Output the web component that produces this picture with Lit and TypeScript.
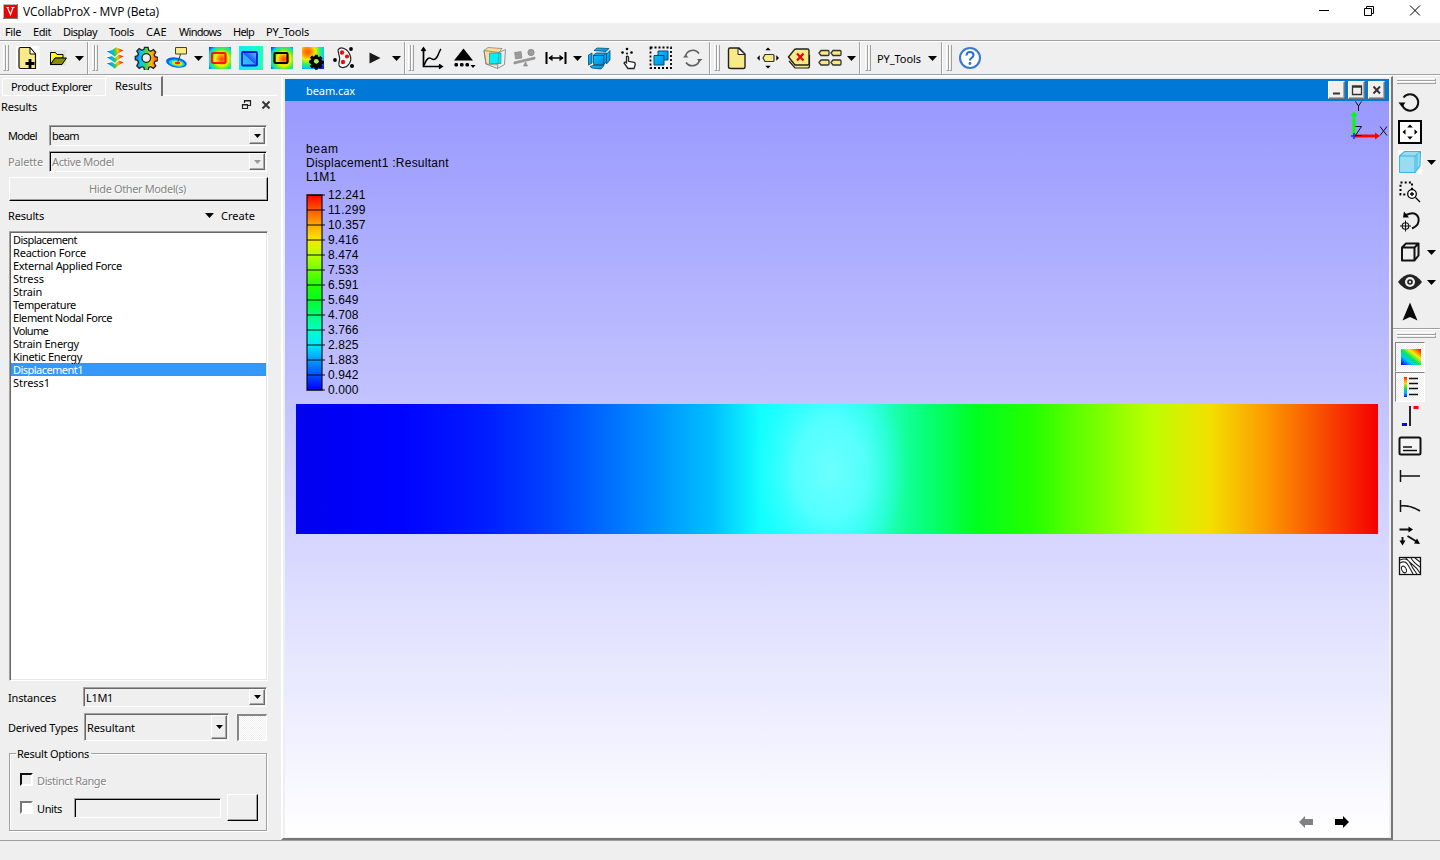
import { LitElement, html, svg, css } from "lit";
import { customElement, property, query } from "lit/decorators.js";

/* A label whose tracking is tuned so that it occupies a known width. */
@customElement("fit-text")
export class FitText extends LitElement {
  static styles = css`
    :host { display: inline-block; white-space: pre; }
    span { display: inline-block; white-space: pre; }
  `;
  @property({ type: Number }) w = 0;
  @property() text = "";
  @query("span") span!: HTMLSpanElement;
  firstUpdated() {
    const n = this.text.length;
    const natural = this.span.getBoundingClientRect().width;
    if (n && this.w) this.span.style.letterSpacing = `${(this.w - natural) / n}px`;
  }
  render() { return html`<span>${this.text}</span>`; }
}

const t = (text: string, w: number) => html`<fit-text .text=${text} .w=${w}></fit-text>`;

const rainbow = svg`
  <linearGradient id="rb" x1="0" y1="0" x2="1" y2="0"><stop offset="0" stop-color="#1060ff"/><stop offset=".25" stop-color="#00d0f0"/><stop offset=".45" stop-color="#30d860"/><stop offset=".7" stop-color="#ffc000"/><stop offset="1" stop-color="#ff3000"/></linearGradient>
  <linearGradient id="lay" gradientUnits="userSpaceOnUse" x1="3" y1="6" x2="20" y2="4"><stop offset="0" stop-color="#0040ff"/><stop offset=".3" stop-color="#00b0ff"/><stop offset=".5" stop-color="#20d060"/><stop offset=".68" stop-color="#ffc000"/><stop offset=".95" stop-color="#ff2000"/></linearGradient>
  <linearGradient id="rbd" x1="0" y1="1" x2="1" y2="0"><stop offset=".05" stop-color="#0018ff"/><stop offset=".3" stop-color="#00c8ff"/><stop offset=".48" stop-color="#00e860"/><stop offset=".68" stop-color="#f8f000"/><stop offset=".95" stop-color="#ff2000"/></linearGradient>
  <linearGradient id="rbv" x1="0" y1="0" x2="0" y2="1"><stop offset="0" stop-color="#ff2000"/><stop offset=".3" stop-color="#ffe000"/><stop offset=".55" stop-color="#20e040"/><stop offset=".8" stop-color="#00b0ff"/><stop offset="1" stop-color="#0020ff"/></linearGradient>
  <radialGradient id="hot" cx=".58" cy=".55" r=".75"><stop offset="0" stop-color="#ff3800"/><stop offset=".2" stop-color="#ff9000"/><stop offset=".4" stop-color="#f8f000"/><stop offset=".6" stop-color="#50f030"/><stop offset=".8" stop-color="#00d8e8"/><stop offset="1" stop-color="#0040ff"/></radialGradient>
  <radialGradient id="hot2" cx=".25" cy=".22" r=".95"><stop offset="0" stop-color="#ff5800"/><stop offset=".2" stop-color="#ff9000"/><stop offset=".38" stop-color="#f0f000"/><stop offset=".6" stop-color="#30f060"/><stop offset=".78" stop-color="#00d0ff"/><stop offset="1" stop-color="#0030ff"/></radialGradient>
  <linearGradient id="mint" x1="0" y1="0" x2="1" y2="0"><stop offset="0" stop-color="#10e8ff"/><stop offset="1" stop-color="#20ffb8"/></linearGradient>
  <linearGradient id="cold" x1="0" y1="1" x2="1" y2="0"><stop offset="0" stop-color="#40c8ff"/><stop offset=".48" stop-color="#30a8ff"/><stop offset=".5" stop-color="#1858ff"/><stop offset="1" stop-color="#70c0ff"/></linearGradient>
  <linearGradient id="blu" x1="0" y1="0" x2="1" y2="1"><stop offset="0" stop-color="#00c8ff"/><stop offset="1" stop-color="#0088e8"/></linearGradient>`;

const gear = "M10.2 2h3.6l.6 3 2 .9 2.7-1.7 2.4 2.5-1.6 2.6.8 2 3 .6v3.4l-3 .6-.8 2 1.6 2.6-2.4 2.5-2.7-1.7-2 .8-.6 3h-3.6l-.6-3-2-.8-2.7 1.7-2.4-2.5L4.1 17l-.8-2-2.3-.6V11l2.3-.7.8-2-1.6-2.6 2.4-2.5 2.7 1.7 2-.9z";

const icons: Record<string, unknown> = {
  newdoc: svg`<rect x="-.5" y="0" width="24" height="24" fill="#fff"/><path d="M4.500 1.500H14l5.500 6.500V22.500H4.500Q3 22.500 3 21V3Q3 1.500 4.500 1.500z" fill="#f8ea86" stroke="#111" stroke-width="1.200"/><path d="M14 1.500V8h5.500z" fill="#fff" stroke="#111"/><path d="M9.500 17.500h9M14 13v9" stroke="#000" stroke-width="2.800"/>`,
  open: svg`<rect x="4" y="4" width="16" height="16" fill="#e3e3e1"/><path d="M4.500 18.500V6.500h5l1.500 2h6V12H9z" fill="#ffff00" stroke="#000"/><path d="M4.500 18.500 9 12h11.500L16 18.500z" fill="#8a8a00" stroke="#000"/>`,
  layers: svg`${[11.500, 5.500, -.5].map((y) => svg`<path transform="translate(0 ${y})" d="M2 5Q8 5.500 13 1L22 5Q17 6.500 12 12z" fill="url(#lay)" stroke="#f6f6f6" stroke-width="1.100"/>`)}`,
  gear: svg`<path d=${gear} transform="translate(.3 -.6)" fill="url(#rb)" stroke="#222" stroke-width="1.300"/><circle cx="12.300" cy="12" r="4.300" fill="#efefef" stroke="#222" stroke-width="1.300"/>`,
  probe: svg`<ellipse cx="10.500" cy="16.500" rx="10.500" ry="5" transform="rotate(10 10 16)" fill="#0060ff"/><ellipse cx="11" cy="17" rx="8" ry="3.500" transform="rotate(10 10 16)" fill="#00e0d0"/><ellipse cx="11.500" cy="17" rx="5.500" ry="2.300" transform="rotate(10 10 16)" fill="#d0f000"/><ellipse cx="11.500" cy="17" rx="2.800" ry="1.200" fill="#ff2000"/><path d="M12 15.500 15 7" stroke="#333"/><path d="M9.500 1.500h11v6.500h-11z" fill="#f8ea86" stroke="#4a4520"/>`,
  hotred: svg`<rect x="1" y="1" width="22" height="22" fill="url(#hot)"/><rect x="4" y="7" width="13.500" height="10" rx="1" fill="none" stroke="#f01818" stroke-width="2.200"/>`,
  cold: svg`<rect x="0" y="0" width="24" height="24" fill="url(#mint)"/><rect x="3" y="6" width="15" height="13.500" rx="1" fill="url(#cold)" stroke="#0018d8" stroke-width="1.800"/>`,
  hotblk: svg`<rect x="1" y="1" width="22" height="22" fill="url(#hot)"/><rect x="4.500" y="7" width="13" height="10" rx="1" fill="none" stroke="#000" stroke-width="2.200"/>`,
  hotgear: svg`<rect x="1" y="1" width="22" height="22" fill="url(#hot2)"/><g transform="translate(8 8) scale(.61)"><path d=${gear} stroke="#000" stroke-width="1.500"/><circle cx="12" cy="12" r="4" fill="#a8f060"/></g>`,
  palette: svg`<path d="M5 4Q7 .800 11 2.500T17 9t-1 9-7 3.500-3-5 .5-5.500T5 4z" fill="#f8f8f8" stroke="#222" stroke-width="1.200"/><g fill="#e81010"><circle cx="9" cy="6.500" r="2.200"/><circle cx="14" cy="10.500" r="2.100"/><circle cx="10" cy="16" r="2.200"/></g><circle cx="18" cy="3" r="1.900"/><circle cx="2" cy="14" r="1.900"/><circle cx="19" cy="20" r="2"/>`,
  play: svg`<path d="M6.500 6.500 17.500 12 6.500 17.500z" fill="#1a1a1a"/>`,
  chart: svg`<path d="M3.500 3v17.500H21M1.500 5 3.500 2l2 3M19 18.500l3 2-3 2" fill="none" stroke="#000" stroke-width="1.700"/><path d="M4 19.500C7 12 9 11 11 12.500s4 1.500 6-1.500 2-6 4-8" fill="none" stroke="#000" stroke-width="1.500"/>`,
  peak: svg`<path d="M11.500 2.500 21 14.500H2z"/><rect x="2.500" y="17" width="3.500" height="3.500" rx="1.200"/><rect x="8" y="17" width="3.500" height="3.500" rx="1.200"/><rect x="13.500" y="17" width="3.500" height="3.500" rx="1.200"/><path d="M18.500 19h5L21 22z"/>`,
  section: svg`<path d="M1 4.500 5 1.500l14 1L16 6.500 14 19 3 18z" fill="#ffdc9a" stroke="#777" stroke-width=".700"/><path d="M6.500 7H18v10.500H6.500z" fill="#00f0ff" stroke="#088" stroke-width=".6"/><path d="M1 4.500 16 6.500 14.500 22.500 3 18zM16 6.500l6.500-3-1 15-7 4" fill="none" stroke="#6a8080" stroke-width=".8"/>`,
  balance: svg`<g fill="#9b9b9b" stroke="#808080" stroke-width=".600"><rect x="2" y="6" width="6.500" height="6.500" transform="rotate(-8 5 9)"/><circle cx="18" cy="6.500" r="3.200"/><path d="m1 16 21-5v2L1 18z"/><path d="m12.500 16 2 4h-4z"/></g>`,
  measure: svg`<path d="M2.500 6v12M21.500 6v12" stroke="#000" stroke-width="2"/><path d="M5 12h14" stroke="#000" stroke-width="1.500"/><path d="m4.500 12 4-3.200v6.400zM19.500 12l-4-3.200v6.400z"/>`,
  explode: svg`<g fill="url(#blu)" stroke="#0a4a70" stroke-width=".8"><path d="M7 4.500 10 2l12 .5-3 3z"/><path d="m19.500 8 3.500-3.500V14l-3.500 4z"/><path d="M1.500 9 5 7v10l-3.500 2z"/><path d="M6 9.500 9 7h10.500L17 9.500z"/><path d="M6.500 9.500H17v9H6.500z"/><path d="M17 9.500 19.500 7v8.500l-2.500 3z"/><path d="m3 20.500 3-1h11l-3 3.500-9-1z"/></g>`,
  touch: svg`<path d="M9.500 10.500q1.500-.8 2 .8v4l5.500 1q1.500.4 1.300 2L17 22.500h-6l-4-5.500q1-1.500 2.500-.2z" fill="#fff" stroke="#222" stroke-width="1.300"/><g><circle cx="10" cy="3" r="1.300"/><circle cx="5.500" cy="6.500" r="1.300"/><circle cx="14.500" cy="6.500" r="1.300"/><circle cx="10" cy="7.500" r="1"/></g>`,
  selbox: svg`<rect x="1.500" y="1.500" width="20.500" height="20.500" fill="none" stroke="#000" stroke-width="1.800" stroke-dasharray="2 2"/><path d="M9 5h10v9H9z" fill="url(#blu)" stroke="#044a78"/><path d="M5 9.500h10v9.500H5z" fill="url(#blu)" stroke="#044a78"/>`,
  refresh: svg`<path d="M4.500 10.500a7.500 7.500 0 0 1 13.500-3M18.500 14a7.500 7.500 0 0 1-13.500 2.500" fill="none" stroke="#5f5f5f" stroke-width="1.600"/><path d="m2 11.500 2.500-3 3 3zM21.500 13l-3 3-2.500-3z" fill="#5f5f5f"/>`,
  note: svg`<path d="M5 2h9l6 6v13q0 1.500-1.500 1.500h-12Q3.500 22.500 3.500 21V3.500Q3.500 2 5 2z" fill="#f8ea86" stroke="#222" stroke-width="1.400"/><path d="M13 2v6.500h7z" fill="#f4f4f4" stroke="#222"/>`,
  movetag: svg`<path d="m7 12 2-3.500h8q1 0 1 1v5q0 1-1 1H9z" fill="#f8ea86" stroke="#333" stroke-width="1.200"/><path d="m12 1.500 2.700 2.700H9.300zM12 22.500l2.700-2.700H9.300zM1 12l2.700-2.700v5.400zM23 12l-2.700-2.700v5.400z"/>`,
  deltag: svg`<path d="m2 15 6 7h12.500q2 0 2-2V9" fill="#f8ea86" stroke="#222" stroke-width="1.200"/><path d="m1.500 11 6-7.500Q8.500 3 9 3h11.500q1.500 0 1.500 1.500v13q0 1.500-1.500 1.500H8z" fill="#f8ea86" stroke="#222" stroke-width="1.400"/><path d="m10 7.500 6.500 7M16.500 7.500l-6.500 7" stroke="#f00000" stroke-width="2.200"/>`,
  tags: svg`${[[1, 4], [13, 4], [1, 13.500], [13, 13.500]].map(([x, y]) => svg`<path transform="translate(${x} ${y})" d="m0 3 2-2.500h7q1 0 1 1v3q0 1-1 1H2z" fill="#f8ea86" stroke="#333" stroke-width="1.300"/>`)}`,
  help: svg`<circle cx="12" cy="12" r="10" fill="#fdfeff" stroke="#3b7ad0" stroke-width="2.100"/><path d="M8.500 9.500q0-3.500 3.500-3.500t3.500 3q0 1.800-1.800 2.800T12 14.500" fill="none" stroke="#2f6fca" stroke-width="2.100"/><circle cx="12" cy="17.500" r="1.400" fill="#2f6fca"/>`,
  rotate: svg`<path d="M4 14a8.200 8.200 0 1 0 1.500-6.500" fill="none" stroke="#111" stroke-width="2"/><path d="M.5 12.500h7L4 17z"/>`,
  fit: svg`<rect x="1" y="1" width="22" height="22" fill="#fff" stroke="#000" stroke-width="2"/><path d="m12 4.500 2.800 3H9.200zM12 19.500l2.800-3H9.200zM4.500 12l3-2.800v5.600zM19.500 12l-3-2.800v5.600z"/>`,
  cube: svg`<rect x="0" y="0" width="24" height="24" fill="#fff"/><path d="m1.500 6 5-4.500h16L22 16l-5 6.500H1.500z" fill="#9adcf0" stroke="#35b6e6" stroke-width="1.100"/><path d="M1.500 6H17v16.500M17 6l5.500-4.500M19 5v15" fill="none" stroke="#35b6e6"/>`,
  zoomsel: svg`<path d="M14 14V2.500H2.500v12H9" fill="none" stroke="#000" stroke-width="2" stroke-dasharray="2 2.200"/><circle cx="14" cy="14" r="4.300" fill="#fff" stroke="#000" stroke-width="1.300"/><path d="M12 14h4M14 12v4M17.500 17.500l4.500 4.500" stroke="#000" stroke-width="1.300"/>`,
  rotc: svg`<path d="M8 5Q18 .500 20.500 8 22 15 14 18.500" fill="none" stroke="#111" stroke-width="2"/><path d="M5 7.500 6 1.500l5 6z"/><circle cx="7.500" cy="16" r="3.300" fill="none" stroke="#111" stroke-width="1.100"/><path d="M2 16h11M7.500 10.500v11" stroke="#111"/>`,
  wirebox: svg`<path d="M4 7.500h12.500V20.500H4zM4 7.500l4-4h12.500v12l-4 5M16.500 7.500l4-4" fill="none" stroke="#111" stroke-width="2" stroke-linejoin="round"/>`,
  eye: svg`<path d="M0 12Q12-3.500 24 12 12 27.500 0 12z" fill="#222"/><circle cx="12" cy="12" r="5" fill="#efefef"/><circle cx="12" cy="12" r="2.800" fill="#222"/><circle cx="12" cy="12" r="1.200" fill="#ddd"/>`,
  north: svg`<path d="m12 2.500 7.500 18-7.500-3.500-7.500 3.500z" fill="#0a0a0a"/>`,
  contour: svg`<rect x="2" y="4" width="20" height="16" fill="url(#rbd)"/>`,
  legend: svg`<rect x="5" y="2" width="3" height="20" fill="url(#rbv)"/><path d="M10 3.500h9M10 8.500h9M10 13.500h9M10 19.500h9" stroke="#111" stroke-width="1.300"/>`,
  minmax: svg`<path d="M12 2v20" stroke="#111" stroke-width="1.800"/><rect x="15.500" y="2" width="5" height="3" fill="#f00"/><rect x="4" y="19" width="5" height="3" fill="#00f"/>`,
  caption: svg`<rect x="1.500" y="3.500" width="21" height="17" rx="1.500" fill="#f4f4f4" stroke="#111" stroke-width="2"/><path d="M5 13h9M5 16.500h14" stroke="#111" stroke-width="1.700"/>`,
  line: svg`<path d="M2.500 6v12M2.500 12H22" stroke="#111" stroke-width="1.500"/>`,
  curve: svg`<path d="M2.500 6v12M2.500 12Q12 11 22 17" fill="none" stroke="#111" stroke-width="1.500"/>`,
  vectors: svg`<path d="M1.500 5.500h10M4.500 13v4M9.500 12l9 5.500" stroke="#111" stroke-width="1.900"/><path d="m10.500 2.500 4.500 3-4.500 3zM1.500 16.500h6l-3 5zM22 20l-6-.5 3-5z"/>`,
  contours: svg`<rect x="1.500" y="3.500" width="21" height="17" fill="#fff" stroke="#111" stroke-width="1.300"/><path d="M2 9q5-3 8 2t5 9M2 6q7-3 10 3t7 11M8 4q3 4 7 7t7 8M13 4q2 4 9 9M17 4l5 4" fill="none" stroke="#222" stroke-width="1.100"/><ellipse cx="6" cy="15.500" rx="2.200" ry="3.500" transform="rotate(-25 6 15.500)" fill="none" stroke="#222"/>`,
};

const icon = (n: string) => html`<svg class="ic" viewBox="0 0 24 24">${icons[n]}</svg>`;
const arrow = html`<svg class="dd" viewBox="0 0 9 5"><path d="M0 0h9L4.500 5z" /></svg>`;

/* Cells of each tool bar: name and cell width; "v" is a drop-down mark. */
const bars: { h: number; cells: [string, number][]; pad?: number }[] = [
  { h: 12, cells: [["newdoc", 31], ["open", 29], ["v", 15]] },
  { h: 11, cells: [["layers", 30], ["gear", 31], ["probe", 33], ["v", 9], ["hotred", 33], ["cold", 30], ["hotblk", 31], ["hotgear", 31], ["palette", 33], ["play", 27], ["v", 16]] },
  { h: 10, cells: [["chart", 32], ["peak", 31], ["section", 31], ["balance", 30], ["measure", 31], ["v", 13], ["explode", 30], ["touch", 30], ["selbox", 33], ["refresh", 31]], pad: 1 },
  { h: 11, cells: [["note", 30], ["movetag", 32], ["deltag", 30], ["tags", 32], ["v", 11]], pad: 2 },
  { h: 13, cells: [["PY_Tools", 50], ["v", 17]] },
  { h: 12, cells: [["help", 30]] },
];

const menus: [string, number][] = [["File", 16], ["Edit", 18], ["Display", 34], ["Tools", 25], ["CAE", 21], ["Windows", 42], ["Help", 21], ["PY_Tools", 43]];
const results: [string, number][] = [["Displacement", 64], ["Reaction Force", 73], ["External Applied Force", 109], ["Stress", 31], ["Strain", 29], ["Temperature", 63], ["Element Nodal Force", 99], ["Volume", 35], ["Strain Energy", 66], ["Kinetic Energy", 69], ["Displacement1", 70], ["Stress1", 37]];
const scale = ["12.241", "11.299", "10.357", "9.416", "8.474", "7.533", "6.591", "5.649", "4.708", "3.766", "2.825", "1.883", "0.942", "0.000"];
const beamStops: [number, string][] = [[0, "#0202ee"], [.04, "#0000f6"], [.1, "#0004ff"], [.175, "#001cff"], [.24, "#0046ff"], [.325, "#008cff"], [.385, "#00c0ff"], [.43, "#12ffff"], [.5, "#2cffff"], [.525, "#2cffe0"], [.585, "#06ff72"], [.628, "#00ff20"], [.68, "#24ff00"], [.735, "#70ff00"], [.79, "#bcff00"], [.845, "#f2e000"], [.895, "#fc9c00"], [.94, "#f85a00"], [.975, "#f62400"], [1, "#f40000"]];
const barStops = ["#ff0000", "#ff5800", "#ffa800", "#f8e800", "#b8ff00", "#70ff00", "#24ff00", "#00ff24", "#00ff78", "#00ffc8", "#00e8ff", "#009cff", "#0050ff", "#0000ff"];

@customElement("app-root")
export class AppRoot extends LitElement {
  static styles = css`
    :host { display: flex; flex-direction: column; width: 1440px; height: 860px; overflow: hidden; box-sizing: border-box; background: #efefef; color: #000; font: 11px/13px "Noto Sans", sans-serif; cursor: default; }
    * { box-sizing: border-box; }
    svg { display: block; flex: none; }
    .defs { position: absolute; width: 0; height: 0; }
    .title { flex: none; height: 23px; background: #fff; display: flex; align-items: center; padding-left: 3px; font: 12px/16px "Open Sans", sans-serif; }
    .title .name { margin-left: 5px; flex: 1; }
    .menu { flex: none; height: 18px; border-bottom: 1px solid #a0a0a0; display: flex; align-items: center; gap: 12px; padding-left: 5px; }
    .tools { flex: none; height: 34px; border-top: 1px solid #fff; border-bottom: 1px solid #a0a0a0; display: flex; box-shadow: 0 1px #fff; }
    .bar { display: flex; align-items: center; }
    .bar + .bar { border-left: 1px solid #a0a0a0; box-shadow: inset 1px 0 #fff; padding-left: 1px; }
    .hand { display: flex; align-items: center; justify-content: center; flex: none; }
    .hand i { width: 3px; height: 26px; border-left: 1px solid #fff; border-right: 1px solid #a0a0a0; border-bottom: 1px solid #a0a0a0; }
    .cell { flex: none; display: flex; align-items: center; justify-content: center; }
    .ic { width: 24px; height: 24px; }
    .dd { width: 9px; height: 5px; }
    .main { flex: 1; display: flex; min-height: 0; padding-top: 1px; }
    .left { width: 281px; flex: none; display: flex; flex-direction: column; }
    .tabs { height: 20px; display: flex; align-items: flex-end; padding-left: 2px; }
    .tab { height: 18px; width: 103px; border: 1px solid #fff; border-right: 0; border-radius: 3px 0 0 0; padding: 1px 0 0 8px; }
    .tab.on { height: 20px; width: 58px; border-bottom: 0; border-right: 2px solid #707070; padding: 2px 0 0 9px; }
    .tabline { width: 114px; height: 1px; background: #fff; }
    .dock { height: 21px; display: flex; align-items: center; padding-left: 1px; }
    .dock .sp { flex: 1; }
    .dock svg { margin-top: -3px; }
    .row { display: flex; align-items: center; padding-left: 8px; flex: none; }
    .lab { flex: none; }
    .dim { color: #848484; text-shadow: 1px 1px #fff; }
    .combo { flex: none; display: flex; border: 1px solid; border-color: #a0a0a0 #fff #fff #a0a0a0; box-shadow: inset 1px 1px #696969; padding: 1px 1px 1px 2px; align-items: stretch; }
    .combo .v { flex: 1; display: flex; align-items: center; }
    .combo .b { width: 16px; border: 1px solid; border-color: #fff #6c6c6c #6c6c6c #fff; box-shadow: inset -1px -1px #a8a8a8; display: flex; align-items: center; justify-content: center; }
    .combo .dd { width: 7px; height: 4px; }
    .combo.off { box-shadow: inset 1px 1px #000; }
    .off .dd { fill: #999; }
    .push { border: 1px solid; border-color: #fff #000 #000 #fff; display: flex; align-items: center; justify-content: center; flex: none; box-shadow: inset -1px -1px #a0a0a0; }
    .hide { width: 259px; height: 24px; margin: 5px 0 0 9px; padding: 0 2px 2px 0; }
    .list { margin: 9px 0 0 9px; width: 259px; height: 450px; background: #fff; border: 1px solid; border-color: #a0a0a0 #fff #fff #a0a0a0; box-shadow: inset 1px 1px #696969, inset -1px -1px #e8e8e8; padding: 1px; flex: none; }
    .item { height: 13px; padding-left: 2px; display: flex; align-items: center; }
    .item.sel { background: #3399ff; color: #fff; outline: 1px dotted #c07030; outline-offset: -1px; }
    .swatch, .on2 { background: repeating-conic-gradient(#efefef 0 25%, #fff 0 50%) 0 0 / 2px 2px; border: 1px solid; border-color: #858585 #fff #fff #858585; }
    .on2 .ic { transform: translate(1px, 0); }
    .swatch { width: 30px; height: 27px; margin-left: 8px; border-width: 2px 1px 1px 2px; }
    .group { display: flex; flex-direction: column; margin: 12px 0 0 9px; width: 258px; height: 78px; border: 1px solid #a0a0a0; box-shadow: 1px 1px #fff, inset 1px 1px #fff; flex: none; }
    .cap { margin: -7px 0 0 6px; padding: 0 2px 0 1px; align-self: flex-start; background: #efefef; height: 13px; line-height: 13px; }
    .opt { display: flex; align-items: center; padding-left: 10px; }
    .chk { width: 13px; height: 13px; border: 2px solid; border-color: #777 #fff #fff #777; background: #fff; margin: -3px 4px 0 0; }
    .chk.offc { background: #efefef; border-color: #111 #fff #fff #111; }
    .units .chk { margin-top: -1px; }
    .units fit-text { padding-top: 2px; }
    .edit { width: 147px; height: 20px; margin-left: 12px; border: 1px solid; border-color: #a0a0a0 #fff #fff #a0a0a0; box-shadow: inset 1px 1px #000; }
    .sq { width: 31px; height: 27px; margin-left: 6px; }
    .mdi { flex: none; width: 1112px; border: 1px solid #fff; border-left-width: 2px; border-right: 2px solid #777; border-bottom: 2px solid #777; padding: 2px 1px 1px 2px; display: flex; flex-direction: column; }
    .cap2 { height: 22px; flex: none; background: #0078d7; color: #fff; display: flex; align-items: center; padding: 0 4px 0 21px; gap: 3px; width: 1104px; }
    .cap2 .nm { flex: 1; }
    .cap2 .wb { width: 17px; height: 18px; background: #efefef; border: 1px solid; border-color: #fff #777 #777 #fff; box-shadow: inset -1px -1px #aaa; }
    .view { width: 1104px; height: 736px; font: 12px "Liberation Sans", sans-serif; }
    .right { flex: 1; display: flex; flex-direction: column; padding-left: 2px; }
    .hh { height: 11px; padding: 2px 0 0 2px; flex: none; }
    .hh.low { height: 12px; }
    .hh i { display: block; width: 39px; height: 3px; border-top: 1px solid #fff; border-bottom: 1px solid #a0a0a0; border-right: 1px solid #a0a0a0; }
    .rb { height: 30px; width: 30px; display: flex; align-items: center; justify-content: center; flex: none; }
    .rr { display: flex; align-items: center; gap: 2px; }
    .rest { margin-top: -1px; }
    .split { height: 2px; margin: 1px 0 0 -2px; border-top: 1px solid #a0a0a0; background: #fff; flex: none; }
    .status { flex: none; height: 20px; border-top: 1px solid #a0a0a0; }
    .gap4 { margin-top: 5px; } .gap6 { margin-top: 6px; } .gap8 { margin-top: 8px; }
    .l41 { width: 41px; } .l75 { width: 75px; } .l76 { width: 76px; } .l197 { width: 197px; } .create { margin-left: 7px; }
    .o1 { margin-top: 14px; } .o2 { margin-top: 7px; }
  `;

  combo(cls: string, w: number, h: number, text: string, tw: number) {
    return html`<div class="combo ${cls}" style="width:${w}px;height:${h}px"><div class="v">${t(text, tw)}</div><div class="b">${arrow}</div></div>`;
  }

  rbtn(n: string, dd = false, on = false) {
    return html`<div class="rr"><div class="rb ${on ? "on2" : ""}">${icon(n)}</div>${dd ? arrow : ""}</div>`;
  }

  viewport() {
    return html`<svg class="view" viewBox="285 101 1104 736">
      <defs>
        <linearGradient id="bg" x1="0" y1="0" x2="0" y2="1"><stop offset="0" stop-color="#9999ff"/><stop offset="1" stop-color="#ffffff"/></linearGradient>
        <linearGradient id="beam" x1="0" y1="0" x2="1" y2="0">${beamStops.map(([o, c]) => svg`<stop offset=${o} stop-color=${c} />`)}</linearGradient>
        <linearGradient id="lg" x1="0" y1="0" x2="0" y2="1">${barStops.map((c, i) => svg`<stop offset=${i / 13} stop-color=${c} />`)}</linearGradient>
        <radialGradient id="glow"><stop offset="0" stop-color="#6cffff"/><stop offset=".45" stop-color="#5cffff" stop-opacity=".85"/><stop offset="1" stop-color="#30ffff" stop-opacity="0"/></radialGradient>
      </defs>
      <rect x="285" y="101" width="1104" height="736" fill="url(#bg)"/>
      <rect x="296" y="404" width="1082" height="130" fill="url(#beam)"/>
      <svg x="296" y="404" width="1082" height="130" viewBox="296 404 1082 130"><ellipse cx="830" cy="470" rx="78" ry="110" fill="url(#glow)"/></svg>
      <text x="306" y="153" textLength="32">beam</text>
      <text x="306" y="167" textLength="142.500">Displacement1 :Resultant</text>
      <text x="306" y="181" textLength="30">L1M1</text>
      <rect x="307" y="195" width="15" height="195" fill="url(#lg)" stroke="#000" stroke-opacity=".6" stroke-width="1.800"/>
      ${scale.map((s, i) => svg`<path d="M307 ${195 + i * 15}h18" stroke="#000" stroke-opacity=".6" stroke-width="1.600"/><text x="328" y=${199 + i * 15} textLength=${s.length > 5 ? 37.500 : 30.500}>${s}</text>`)}
      <path d="M1354 135V114" stroke="#0f0" stroke-width="3"/><path d="m1354 111 3.500 5h-7z" fill="#0f0"/>
      <path d="M1355 136h20" stroke="#f00" stroke-width="3"/><path d="m1380 136-5-3.500v7z" fill="#f00"/>
      <path d="M1351 136h5M1354 133v6" stroke="#22f" stroke-width="1.500"/>
      <path d="m1355.500 101.500 3 4.500 3-4.500M1358.500 106v5M1355.500 126.500h6l-6 9h6M1380 126.500l7 9M1387 126.500l-7 9" fill="none" stroke="#111"/>
      <path d="m1299 822 6-6v3h8v6h-8v3z" fill="#808080"/><path d="m1349 822-6-6v3h-8v6h8v3z"/>
    </svg>`;
  }

  render() {
    return html`
      <svg class="defs"><defs>${rainbow}</defs></svg>
      <div class="title">
        <svg width="15" height="15" viewBox="0 0 15 15"><rect width="15" height="15" fill="#777"/><rect width="14" height="14" fill="#bbb"/><rect x="1" y="1" width="13" height="13" fill="#f00000"/><path d="M4.500 3.500 7.500 10.500 10 3.500M3.500 3.500h2.500M8.500 3.500h3" fill="none" stroke="#fff" stroke-width="1.200"/></svg>
        <span class="name">${t("VCollabProX - MVP (Beta)", 136)}</span>
        <svg width="125" height="23" viewBox="1315 0 125 23" fill="none" stroke="#000"><path d="M1319 10.500h10M1364.500 8.500h7v7h-7zM1366.500 8.500v-2h7v7h-2M1410 5.500l10 10M1420 5.500l-10 10"/></svg>
      </div>
      <div class="menu">${menus.map(([m, w]) => t(m, w))}</div>
      <div class="tools">
        ${bars.map((b) => html`<div class="bar"><div class="hand" style="width:${b.h}px"><i></i><i></i></div>
          ${b.cells.map(([n, w]) => html`<div class="cell" style="width:${w}px">${n === "v" ? arrow : n === "PY_Tools" ? t(n, 44) : icon(n)}</div>`)}
          <div class="cell" style="width:${b.pad ?? 0}px"></div></div>`)}
      </div>
      <div class="main">
        <div class="left">
          <div class="tabs"><div class="tab">${t("Product Explorer", 81)}</div><div class="tab on">${t("Results", 37)}</div><div class="tabline"></div></div>
          <div class="dock">${t("Results", 36)}<span class="sp"></span>
            <svg width="40" height="12" viewBox="0 0 40 12" fill="none" stroke="#222"><path d="M3.500 4V1.500h6v5H7M3 2h7M1.500 5.500h5v4h-5zM1 6h6" stroke-width="1.200"/><path d="m21.500 2.500 7 7M28.500 2.500l-7 7" stroke-width="1.900" stroke="#333"/></svg></div>
          <div class="row gap8"><span class="lab l41">${t("Model", 29)}</span>${this.combo("", 218, 21, "beam", 27)}</div>
          <div class="row dim gap4"><span class="lab l41">${t("Palette", 35)}</span>${this.combo("off", 218, 21, "Active Model", 62)}</div>
          <div class="push hide dim">${t("Hide Other Model(s)", 97)}</div>
          <div class="row gap8"><span class="lab l197">${t("Results", 36)}</span>${arrow}<span class="lab create">${t("Create", 34)}</span></div>
          <div class="list">${results.map(([r, w]) => html`<div class="item ${r === "Displacement1" ? "sel" : ""}">${t(r, w)}</div>`)}</div>
          <div class="row gap6"><span class="lab l75">${t("Instances", 48)}</span>${this.combo("", 184, 20, "L1M1", 27)}</div>
          <div class="row gap6"><span class="lab l76">${t("Derived Types", 70)}</span>${this.combo("", 145, 28, "Resultant", 48)}<div class="swatch"></div></div>
          <div class="group"><div class="cap">${t("Result Options", 72)}</div>
            <div class="opt dim o1"><span class="chk offc"></span>${t("Distinct Range", 69)}</div>
            <div class="opt units o2"><span class="chk"></span>${t("Units", 25)}<span class="edit"></span><span class="push sq"></span></div>
          </div>
        </div>
        <div class="mdi">
          <div class="cap2"><span class="nm">${t("beam.cax", 49)}</span>
            <svg class="wb" viewBox="0 0 15 16"><path d="M4 11.500h7" stroke="#333" stroke-width="2"/></svg>
            <svg class="wb" viewBox="0 0 15 16"><path d="M3.500 4h9v8.500h-9zM3 5h10" fill="none" stroke="#333" stroke-width="1.300"/></svg>
            <svg class="wb" viewBox="0 0 15 16"><path d="m4.500 4.500 6.500 7M11 4.500l-6.500 7" stroke="#333" stroke-width="1.900"/></svg></div>
          ${this.viewport()}
        </div>
        <div class="right">
          <div class="hh"><i></i><i></i></div>
          ${this.rbtn("rotate")}${this.rbtn("fit")}${this.rbtn("cube", true)}${this.rbtn("zoomsel")}${this.rbtn("rotc")}${this.rbtn("wirebox", true)}${this.rbtn("eye", true)}${this.rbtn("north")}
          <div class="split"></div>
          <div class="hh low"><i></i><i></i></div>
          ${this.rbtn("contour", false, true)}${this.rbtn("legend", false, true)}
          <div class="rest">${["minmax", "caption", "line", "curve", "vectors", "contours"].map((n) => this.rbtn(n))}</div>
        </div>
      </div>
      <div class="status"></div>`;
  }
}
